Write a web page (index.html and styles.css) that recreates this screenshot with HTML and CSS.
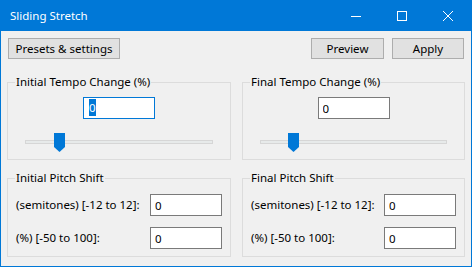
FILE: index.html
```html
<!DOCTYPE html>
<html lang="en">
<head>
    <meta charset="UTF-8">
    <title>Sliding Stretch</title>
    <link rel="stylesheet" href="styles.css">
</head>
<body>
    <div class="window">
        <div class="titlebar">
            <span class="title">Sliding Stretch</span>
            <div class="caption-buttons">
                <span class="caption-btn">
                    <svg width="10" height="10" viewBox="0 0 10 10"><path d="M0 5.5h10" stroke="#fff" stroke-width="1"/></svg>
                </span>
                <span class="caption-btn">
                    <svg width="10" height="10" viewBox="0 0 10 10"><rect x="0.5" y="0.5" width="9" height="9" fill="none" stroke="#fff" stroke-width="1"/></svg>
                </span>
                <span class="caption-btn">
                    <svg width="10" height="10" viewBox="0 0 10 10"><path d="M0 0L10 10M10 0L0 10" stroke="#fff" stroke-width="1"/></svg>
                </span>
            </div>
        </div>

        <div class="client">
            <div class="toolbar">
                <button class="btn presets">Presets &amp; settings</button>
                <span class="spacer"></span>
                <button class="btn preview">Preview</button>
                <button class="btn apply">Apply</button>
            </div>

            <div class="groups">
                <fieldset class="group tempo">
                    <legend>Initial Tempo Change (%)</legend>
                    <div class="edit focused"><span class="selected">0</span></div>
                    <div class="slider">
                        <div class="track"></div>
                        <svg class="thumb" style="left: 29px" width="11" height="19" viewBox="0 0 11 19"><path d="M0 0H11V14L5.5 19L0 14Z" fill="#0078d7"/></svg>
                    </div>
                </fieldset>

                <fieldset class="group tempo">
                    <legend>Final Tempo Change (%)</legend>
                    <input class="edit" type="text" value="0">
                    <div class="slider">
                        <div class="track"></div>
                        <svg class="thumb" style="left: 28px" width="11" height="19" viewBox="0 0 11 19"><path d="M0 0H11V14L5.5 19L0 14Z" fill="#0078d7"/></svg>
                    </div>
                </fieldset>

                <fieldset class="group pitch">
                    <legend>Initial Pitch Shift</legend>
                    <div class="row">
                        <label>(semitones) [-12 to 12]:</label>
                        <input class="edit" type="text" value="0">
                    </div>
                    <div class="row">
                        <label>(%) [-50 to 100]:</label>
                        <input class="edit" type="text" value="0">
                    </div>
                </fieldset>

                <fieldset class="group pitch">
                    <legend>Final Pitch Shift</legend>
                    <div class="row">
                        <label>(semitones) [-12 to 12]:</label>
                        <input class="edit" type="text" value="0">
                    </div>
                    <div class="row">
                        <label>(%) [-50 to 100]:</label>
                        <input class="edit" type="text" value="0">
                    </div>
                </fieldset>
            </div>
        </div>
    </div>
</body>
</html>
```

FILE: styles.css
```css
body {
    margin: 0;
    font-family: 'Noto Sans', 'Open Sans', sans-serif;
    font-size: 11.5px;
    color: #000000;
    background-color: #ffffff;
}
.window {
    width: 470px;
    height: 265px;
    border: 1px solid #0078d7;
    background-color: #f0f0f0;
    display: flex;
    flex-direction: column;
}
.titlebar {
    height: 30px;
    background-color: #0078d7;
    color: #ffffff;
    display: flex;
    align-items: center;
    flex-shrink: 0;
}
.title {
    padding-left: 9px;
    font-size: 11.5px;
    line-height: 16px;
    margin-top: -1px;
}
.caption-buttons {
    margin-left: auto;
    display: flex;
    height: 30px;
}
.caption-btn {
    width: 46px;
    height: 30px;
    display: flex;
    align-items: center;
    justify-content: center;
}
.client {
    padding: 7px 6px 0 6px;
}
.toolbar {
    display: flex;
    gap: 8px;
    margin: 0 1px;
}
.spacer {
    flex: 1;
}
.btn {
    height: 21px;
    padding: 0;
    border: 1px solid #adadad;
    background-color: #e1e1e1;
    font-family: inherit;
    font-size: 11.5px;
    line-height: 17px;
    color: #000000;
}
.presets {
    width: 112px;
}
.preview {
    width: 73px;
}
.apply {
    width: 72px;
}
.groups {
    display: grid;
    grid-template-columns: 224px 223px;
    column-gap: 11px;
    row-gap: 10px;
    margin-top: 15px;
}
.group {
    margin: 0;
    padding: 0 8px 7px 8px;
    border: 1px solid #dcdcdc;
    min-width: 0;
}
.group legend {
    padding: 0 1px;
    margin-left: -1px;
    line-height: 16px;
}
.edit {
    display: block;
    box-sizing: border-box;
    width: 72px;
    height: 22px;
    margin: 0;
    padding: 0 4px;
    border: 1px solid #7a7a7a;
    background-color: #ffffff;
    font-family: inherit;
    font-size: 11.5px;
    line-height: 20px;
    color: #000000;
    outline: none;
}
.tempo .edit {
    margin: 7px auto 0 auto;
}
.edit.focused {
    border-color: #0078d7;
    padding-left: 5px;
}
.selected {
    background-color: #0078d7;
    color: #ffffff;
    padding: 1px 0;
}
.slider {
    position: relative;
    height: 19px;
    margin: 14px 9px 0 9px;
}
.track {
    position: relative;
    top: 7px;
    height: 2px;
    border: 1px solid #d6d6d6;
    background-color: #e7eaea;
}
.thumb {
    position: absolute;
    top: 0;
    display: block;
}
.pitch {
    padding-bottom: 7px;
}
.row {
    display: flex;
    align-items: center;
    justify-content: space-between;
    margin-top: 11px;
}
.row:first-of-type {
    margin-top: 8px;
}
.row label {
    line-height: 16px;
}
```
